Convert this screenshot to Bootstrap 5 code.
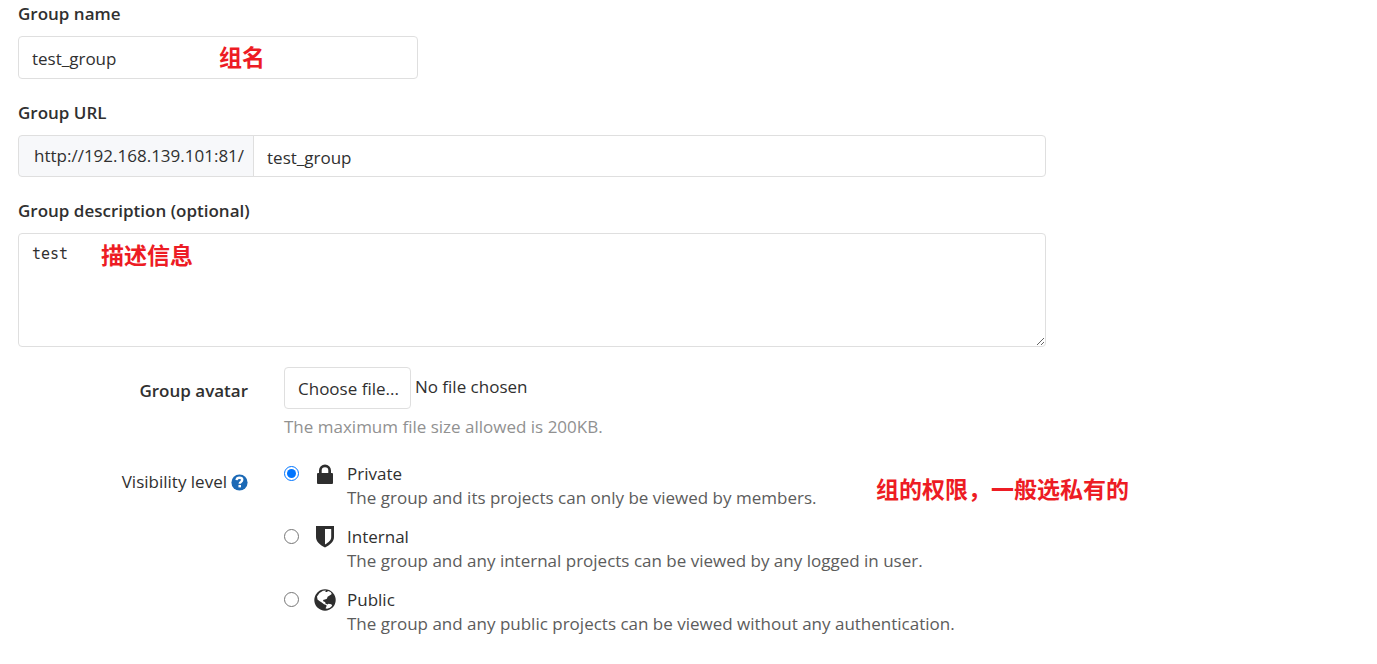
<!DOCTYPE html>
<html lang="en">
<head>
<meta charset="utf-8">
<meta name="viewport" content="width=device-width, initial-scale=1">
<title>New group</title>
<link href="https://cdn.jsdelivr.net/npm/bootstrap@5.3.0/dist/css/bootstrap.min.css" rel="stylesheet">
<style>
  body { font-family: "Open Sans", "Noto Sans CJK SC", sans-serif; font-size: 17px; line-height: 24px; color: #303030; }
  .group-form { max-width: 1064px; padding: 2px 18px 0; }
  .field { margin-bottom: 22px; }
  .field-label { display: block; margin-bottom: 10px; }
  .field-label, .side-label { font-weight: 600; }
  .form-control, .input-group-text, .btn-file { font-size: 17px; line-height: 24px; color: #303030; border: 1px solid #dfdfdf; border-radius: 4px; }
  .form-control { height: 42px; padding: 8px 13px 6px; }
  .input-group-text { background: #f7f8fa; padding: 8px 9px 8px 15px; }
  .name-field { height: 43px; max-width: 400px; }
  textarea.form-control { height: 114px; font-family: "DejaVu Sans Mono", monospace; font-size: 15px; line-height: 24px; padding: 8px 13px; }
  .wide-row { --bs-gutter-x: 36px; }
  .btn-file { padding: 9px 11px 7px 13px; background: #fff; }
  .help-text { color: #919191; margin-top: 6px; }
  .visibility-row { margin-top: 23px; }
  .option-list { row-gap: 15px; }
  .option-list input { width: 15px; height: 15px; margin: 4px 15px 0 0; }
  .option-list svg { margin-right: 11px; }
  .option-desc { color: #5c5c5c; }
  .note { position: absolute; color: #ed1c24; font-family: "Noto Sans CJK SC", sans-serif; font-weight: 700; font-size: 23px; line-height: 32px; white-space: nowrap; pointer-events: none; }
  .note-name { left: 201px; top: 38px; }
  .note-desc { left: 83px; top: 39px; }
  .note-visibility { left: 610px; top: 10px; }
</style>
</head>
<body>
<form class="group-form">
  <div class="field position-relative">
    <label class="field-label" for="name">Group name</label>
    <input class="form-control name-field" id="name" type="text" value="test_group">
    <span class="note note-name" lang="zh">组名</span>
  </div>
  <div class="field">
    <label class="field-label" for="path">Group URL</label>
    <div class="input-group">
      <span class="input-group-text">http://192.168.139.101:81/</span>
      <input class="form-control" id="path" type="text" value="test_group">
    </div>
  </div>
  <div class="position-relative mb-3 pb-1">
    <label class="field-label" for="description">Group description (optional)</label>
    <textarea class="form-control" id="description">test</textarea>
    <span class="note note-desc" lang="zh">描述信息</span>
  </div>
  <div class="row wide-row">
    <div class="col-3 text-end pt-2 mt-1"><label class="side-label" for="avatar">Group avatar</label></div>
    <div class="col-9">
      <div class="d-flex">
        <button class="btn btn-file" id="avatar" type="button">Choose file...</button>
        <span class="ms-1 pt-2">No file chosen</span>
      </div>
      <div class="help-text">The maximum file size allowed is 200KB.</div>
    </div>
  </div>
  <div class="row wide-row visibility-row">
    <div class="col-3 d-flex justify-content-end align-items-center align-self-start gap-1 pt-2">
      <span id="visibility">Visibility level</span>
      <a href="#" class="d-flex" aria-label="Help">
        <svg width="17" height="17" viewBox="0 0 16 16"><circle cx="8" cy="8" r="7.6" fill="#1b69b6"/><path d="M5.2 5.8C5.400 4.200 6.500 3.500 8 3.500c1.600 0 2.600.8 2.600 2 0 1-.6 1.500-1.300 2-.8.5-1.100.8-1.100 1.700" fill="none" stroke="#fff" stroke-width="2.200"/><rect x="7" y="10.300" width="2.400" height="2.300" fill="#fff"/></svg>
      </a>
    </div>
    <div class="col-9 position-relative">
      <div class="option-list d-flex flex-column" role="radiogroup" aria-labelledby="visibility">
        <div class="d-flex align-items-start">
          <input type="radio" name="level" id="private" checked>
          <label class="d-flex align-items-start" for="private">
            <svg width="22" height="24" viewBox="0 0 22 24" fill="#2e2e2e"><path d="M3 12q0-1 1-1h1V8.500a6 6 0 0 1 12 0V11h1q1 0 1 1v9q0 1-1 1H4q-1 0-1-1zM7.700 11h6.600V8.500a3.300 3.300 0 0 0-6.600 0z"/></svg>
            <span>Private<span class="option-desc d-block">The group and its projects can only be viewed by members.</span></span>
          </label>
        </div>
        <div class="d-flex align-items-start">
          <input type="radio" name="level" id="internal">
          <label class="d-flex align-items-start" for="internal">
            <svg width="22" height="24" viewBox="0 0 22 24" fill="#2e2e2e"><path fill-rule="evenodd" d="M2 1h18v11c0 5-4 7.700-9 10.500C6 19.700 2 17 2 12zM11 4v15.500c3.800-2.300 6.200-4.200 6.200-7.500V4z"/></svg>
            <span>Internal<span class="option-desc d-block">The group and any internal projects can be viewed by any logged in user.</span></span>
          </label>
        </div>
        <div class="d-flex align-items-start">
          <input type="radio" name="level" id="public">
          <label class="d-flex align-items-start" for="public">
            <svg width="22" height="24" viewBox="0 0 22 24"><circle cx="11" cy="12" r="10.700" fill="#2e2e2e"/><path d="M3 8.500 5.500 5l3.500-2.200 3-.3-.8 1.400 1.700.2 1.200-1 2.500.8 1.200 2-1.800 1.400-2.400 1.500-.7 2-2 .8-1.900.3.500 1.500 1.600.6.500 1.700 1.600.5-.2 1-3-.9-2.200-1.900L5.400 13 3.500 11.500z" fill="#fff"/><path d="m12.500 17 2-1.300 2.800.5.900 1.500-2.200 2.100-3 1-1.500-.6.900-1.500z" fill="#fff"/></svg>
            <span>Public<span class="option-desc d-block">The group and any public projects can be viewed without any authentication.</span></span>
          </label>
        </div>
      </div>
      <span class="note note-visibility" lang="zh">组的权限，一般选私有的</span>
    </div>
  </div>
</form>
<script src="https://cdn.jsdelivr.net/npm/bootstrap@5.3.0/dist/js/bootstrap.bundle.min.js"></script>
</body>
</html>
